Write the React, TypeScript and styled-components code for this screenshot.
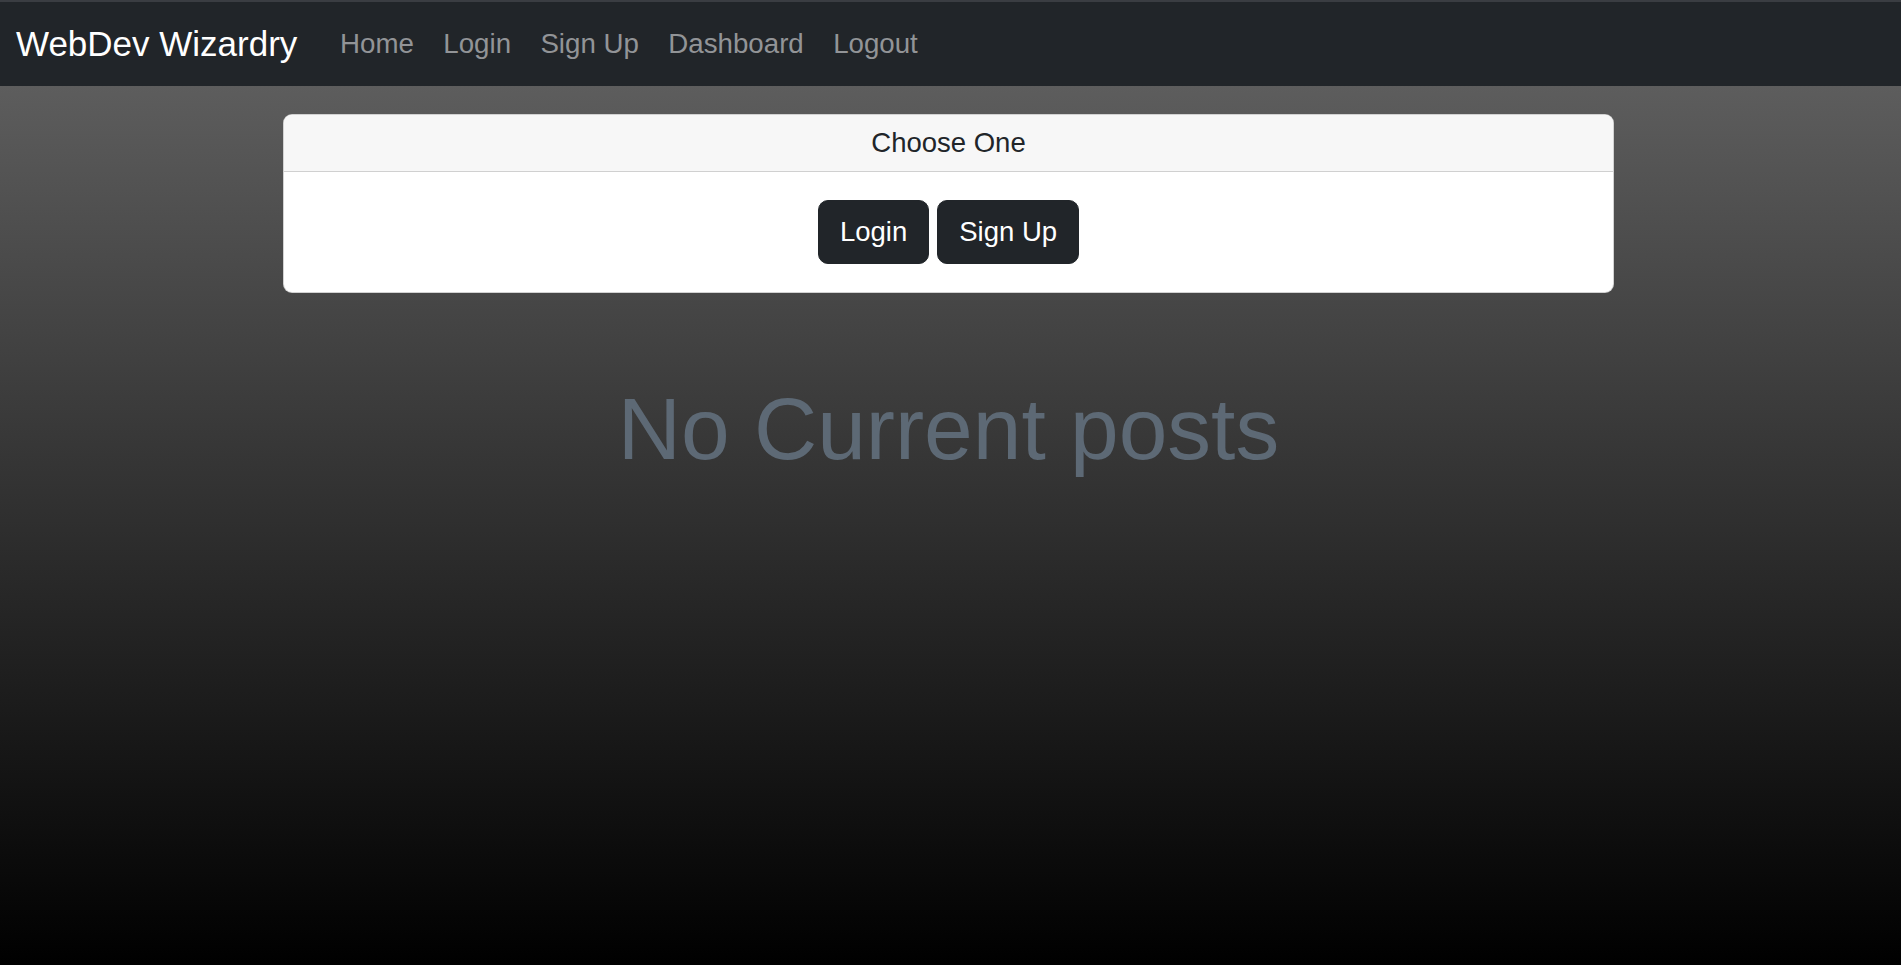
import React from "react";
import styled, { createGlobalStyle } from "styled-components";

const GlobalStyle = createGlobalStyle`
  html, body {
    margin: 0;
    padding: 0;
  }
  body {
    min-height: 100vh;
    font-family: "Liberation Sans", Arial, Helvetica, sans-serif;
    background: linear-gradient(to bottom, #666666 0%, #000000 100%);
    background-attachment: fixed;
  }
  * { box-sizing: border-box; }
`;

const Page = styled.div`
  min-height: 100vh;
  display: flex;
  flex-direction: column;
`;

const Navbar = styled.nav`
  height: 86px;
  border-top: 2px solid #3a3d42;
  background: #212529;
  display: flex;
  align-items: center;
  padding: 0 16px;
`;

const Brand = styled.a`
  color: #ffffff;
  font-size: 35px;
  text-decoration: none;
  margin-right: 28px;
  white-space: nowrap;
`;

const NavList = styled.div`
  display: flex;
  align-items: center;
`;

const NavLink = styled.a`
  color: #929497;
  font-size: 27.7px;
  padding: 0 14.7px;
  text-decoration: none;
  white-space: nowrap;
`;

const Main = styled.main`
  display: flex;
  flex-direction: column;
  align-items: center;
  padding: 28px 4px 0 0;
`;

const Card = styled.section`
  width: 1331px;
  background: #ffffff;
  border: 1px solid rgba(0, 0, 0, 0.175);
  border-radius: 9px;
  overflow: hidden;
`;

const CardHeader = styled.div`
  background: #f7f7f7;
  border-bottom: 1px solid #d0d0d0;
  padding: 12px 16px;
  line-height: 32px;
  font-size: 27.5px;
  color: #212529;
  text-align: center;
`;

const CardBody = styled.div`
  padding: 28px 16px;
  display: flex;
  justify-content: center;
  gap: 8px;
`;

const DarkButton = styled.button`
  font-family: inherit;
  font-size: 27.5px;
  line-height: 42px;
  padding: 10px 21px;
  border: 1px solid #212529;
  border-radius: 10px;
  background: #212529;
  color: #ffffff;
  cursor: pointer;
`;

const EmptyTitle = styled.h1`
  margin: 84px 0 0;
  font-size: 87.5px;
  font-weight: 400;
  line-height: 1.2;
  color: #5d6975;
  text-align: center;
`;

export default function App() {
  const links = ["Home", "Login", "Sign Up", "Dashboard", "Logout"];
  return (
    <>
      <GlobalStyle />
      <Page>
        <Navbar>
          <Brand href="#">WebDev Wizardry</Brand>
          <NavList>
            {links.map((l) => (
              <NavLink key={l} href="#">
                {l}
              </NavLink>
            ))}
          </NavList>
        </Navbar>
        <Main>
          <Card>
            <CardHeader>Choose One</CardHeader>
            <CardBody>
              <DarkButton>Login</DarkButton>
              <DarkButton>Sign Up</DarkButton>
            </CardBody>
          </Card>
          <EmptyTitle>No Current posts</EmptyTitle>
        </Main>
      </Page>
    </>
  );
}
